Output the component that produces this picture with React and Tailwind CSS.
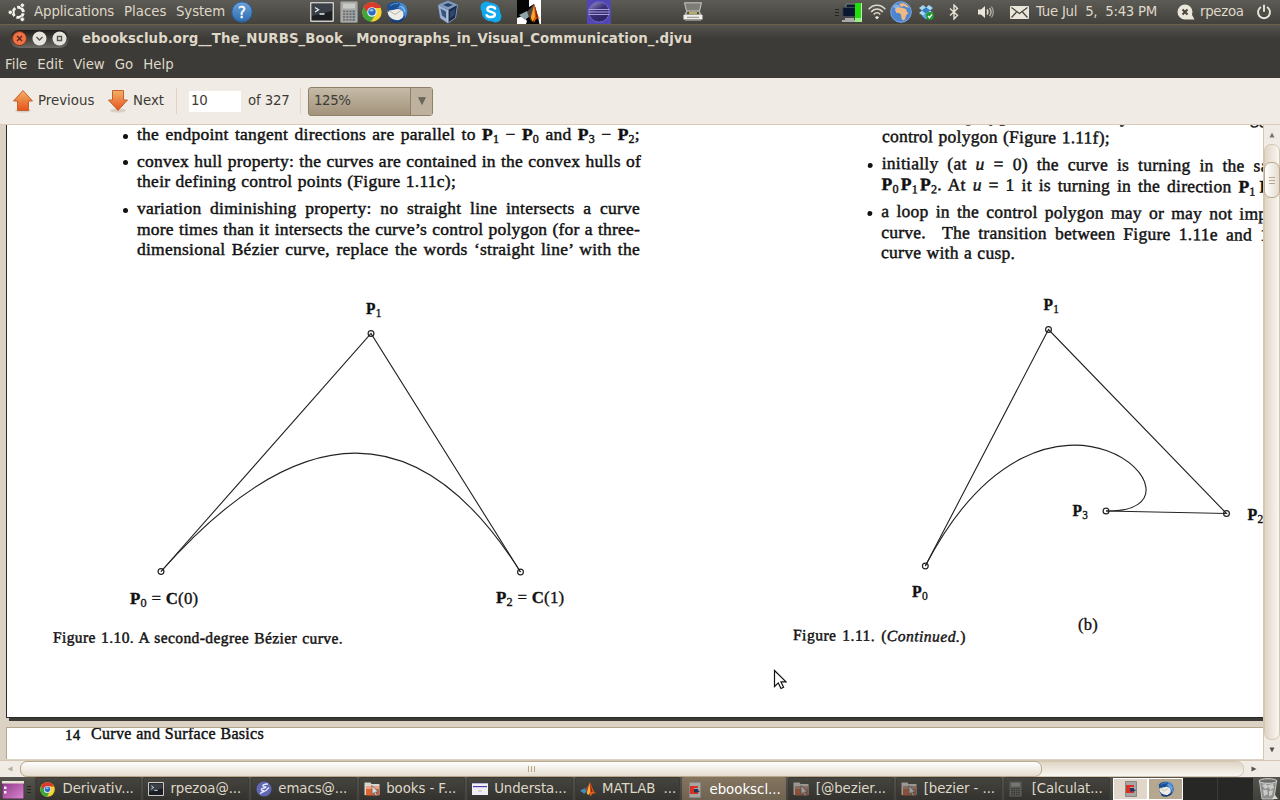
import React from "react";

/* ---------- panel icons ---------- */

const Ubuntu = () => (
  <svg viewBox="0 0 18 20" className="block h-5 w-[18px]">
    <circle cx="10.200" cy="10.300" r="5.100" fill="none" stroke="#f4f1e8" strokeWidth="2.900" strokeDasharray="8.680 2" strokeDashoffset="-1" />
    <g fill="#f4f1e8" stroke="#504e49" strokeWidth=".8">
      <circle cx="2.300" cy="10.300" r="2.200" />
      <circle cx="14.300" cy="3.200" r="2.200" />
      <circle cx="14.300" cy="17.300" r="2.200" />
    </g>
  </svg>
);

const Help = () => (
  <svg viewBox="0 0 22 22" className="block size-[22px]">
    <defs>
      <linearGradient id="help" x1="0" y1="0" x2="0" y2="1">
        <stop offset="0" stopColor="#6fa3d8" />
        <stop offset="1" stopColor="#2b6cb0" />
      </linearGradient>
    </defs>
    <circle cx="11" cy="11" r="10.200" fill="url(#help)" stroke="#2a5f9c" />
    <text x="11" y="16.500" textAnchor="middle" fontSize="15" fill="#fff" stroke="#fff" strokeWidth=".4" fontFamily="DejaVu Sans, sans-serif">?</text>
  </svg>
);

const Terminal = ({ className }) => (
  <svg viewBox="0 0 24 20" className={className} preserveAspectRatio="none">
    <rect x="0.7" y="0.7" width="22.6" height="18.6" rx="1" fill="#1c1e22" stroke="#c9c9c9" strokeWidth="1.600" />
    <path d="M2 2h20v7L2 14z" fill="#3b3f46" />
    <path d="M5 5.500l3.500 2.300L5 10M9.500 12h5" fill="none" stroke="#e6edf2" strokeWidth="1.300" />
  </svg>
);

const Calculator = ({ className, dim }) => (
  <svg viewBox="0 0 18 22" className={className}>
    <rect x="0.5" y="0.5" width="17" height="21" rx="1" fill={dim ? "#5c5c58" : "#a8a8a6"} stroke={dim ? "#4b4b48" : "#868684"} />
    <rect x="3" y="2.5" width="12" height="5" fill={dim ? "#777" : "#c7cbc4"} />
    {[9.5, 12.3, 15.1, 17.9].map((y) =>
      [3, 6.2, 9.4, 12.6].map((x) => (
        <rect key={x + "-" + y} x={x} y={y} width="2.2" height="1.8" fill={dim ? "#383836" : x > 12 ? "#53667a" : "#6d7073"} />
      ))
    )}
  </svg>
);

const Chrome = ({ className }) => (
  <svg viewBox="0 0 20 20" className={className}>
    <circle cx="10" cy="10" r="9.700" fill="#f7d430" />
    <path d="M10 10L1.600 5.200A9.700 9.700 0 0 0 9 19.600L14 12z" fill="#3fa63c" />
    <path d="M1.600 5.200A9.700 9.700 0 0 1 18.800 6H10L6 11z" fill="#d93a2b" />
    <circle cx="10" cy="10" r="4.800" fill="#eef2f5" />
    <circle cx="10" cy="9.800" r="3.700" fill="#2b6bc4" />
    <ellipse cx="9.500" cy="8.200" rx="2" ry="1.200" fill="#8fc0f0" />
  </svg>
);

const Thunderbird = ({ className }) => (
  <svg viewBox="0 0 22 22" className={className}>
    <circle cx="11.500" cy="11" r="10" fill="#1d4f94" />
    <path d="M7 3C11 0 16 1 19 4c3 4 3 9 0 13-.5-5-3-9-8-10z" fill="#4389cf" />
    <path d="M2 8C5 11 8 8 12 8c4 0 7 4 5 8-2 4-8 4-12 1-3-2-4-5-3-9z" fill="#eeece6" />
    <path d="M3 9.500l6 4 6-4" fill="none" stroke="#b5b2aa" />
    <path d="M1 5C4 1 9 0 13 2l2 3-5 2-6 2-2 2z" fill="#1b4f91" />
    <path d="M4 5c2-2 5-3 8-2" stroke="#5b9bd8" fill="none" />
    <path d="M13 5c3 0 5 2 6 6" stroke="#8ec7f4" fill="none" strokeWidth="1.200" />
    <path d="M17 18c-3 3-8 4-12 1" stroke="#153d74" fill="none" strokeWidth="2" />
  </svg>
);

const VirtualBox = () => (
  <svg viewBox="0 0 22 24" className="block h-6 w-[22px]">
    <path d="M11 1l9.500 4-2 13L11 23l-7.500-5-2-13z" fill="#1b2a45" stroke="#7c95b8" />
    <path d="M11 1l9.500 4L11 10 1.500 5z" fill="#7f9bc1" />
    <path d="M1.500 5L11 10v13l-7.500-5z" fill="#9db4d1" />
    <path d="M3.500 8.500L9 11.500v7l-4-3z" fill="#3a5480" />
    <path d="M18.500 8.500L13 11.500v7l4-3z" fill="#2d4672" />
    <path d="M11 10v12" stroke="#c5d3e6" />
    <path d="M6 5l5-2 5 2-5 2z" fill="#2b3f63" />
  </svg>
);

const Skype = () => (
  <svg viewBox="0 0 22 22" className="block size-[22px]">
    <circle cx="11" cy="11" r="9.200" fill="#12a8ee" />
    <circle cx="6.500" cy="6.500" r="6" fill="#12a8ee" />
    <circle cx="15.500" cy="15.500" r="6" fill="#12a8ee" />
    <path d="M15 7.500C14 5.300 7.400 5 7.400 8.300c0 3.200 7.500 2 7.500 5.300 0 3.200-7 3.200-8.200.6" fill="none" stroke="#fff" strokeWidth="2.500" strokeLinecap="round" />
  </svg>
);

const MatlabShape = () => (
  <>
    <path d="M0 13l7-3 4 3-5 5z" fill="#3f8fc4" />
    <path d="M7 10c4-1 5-5 7-8l-2 12-2 4z" fill="#8a4a35" />
    <path d="M14 1c2 3 4 12 9 17-4-2-6 0-8 4-1-4-2-6-5-5z" fill="#e2641c" />
    <path d="M13.500 3l1 12-2.500 5-2-3z" fill="#f6b73a" />
    <path d="M14.500 3l4 12-3 1z" fill="#a3210f" />
  </>
);

const Matlab = () => (
  <svg viewBox="0 0 24 24" className="block size-6">
    <path d="M0 0h24v24H0z" fill="#050505" />
    <path d="M12 0h12v24h-1.500C21 16 19 9 17 4L12 7zM0 18l6-2 4 5-1 3H0z" fill="#fff" />
    <g transform="translate(1 1)">
      <path d="M1 14l8-4 4 4-6 5z" fill="#8fa3ab" />
      <path d="M9 10c3-1 5-5 7-7l-2 12-3 2z" fill="#4d4640" />
      <path d="M16 3c2 3 2 10 6 15-3-2-4 0-6 4-1-4-2-5-4-3z" fill="#d95913" />
      <path d="M16 5l1 11-3 5-1-5z" fill="#f7a92b" />
      <path d="M17 5l3 11-2 1z" fill="#84200f" />
    </g>
  </svg>
);

const Eclipse = () => (
  <svg viewBox="0 0 24 24" className="block size-6">
    <path d="M0 0h24v24H0z" fill="#5246b4" />
    <defs>
      <linearGradient id="ecl" x1="0" y1="0" x2="0.6" y2="1">
        <stop offset="0" stopColor="#a39bd0" />
        <stop offset="0.5" stopColor="#3a3178" />
        <stop offset="1" stopColor="#2c2466" />
      </linearGradient>
    </defs>
    <circle cx="12" cy="12" r="10.200" fill="url(#ecl)" stroke="#7166c4" />
    <path d="M1.500 9.500h21M1.500 12h21M1.500 14.500h21" stroke="#a9a2da" strokeWidth="1.100" />
  </svg>
);

const Scanner = () => (
  <svg viewBox="0 0 20 20" className="block size-5">
    <path d="M1.500.8h17L16.500 9h-13z" fill="#7d7d79" stroke="#c9c8c2" />
    <path d="M3.500 9h13l3 5h-19z" fill="#b9b8b2" />
    <path d="M4.500 9.800h11l1 2.400h-13z" fill="#4d4b3c" />
    <path d="M6 10.300h8v1.400H6z" fill="#e6d87a" />
    <path d="M.5 13h19v4.500H.5z" fill="#efeee9" />
    <path d="M2 18h16" stroke="#9c9b96" strokeWidth="1.500" />
    <path d="M4 15.300h12" stroke="#8c8b86" />
  </svg>
);

const NetMonitor = () => (
  <svg viewBox="0 0 22 22" className="block size-[22px]">
    <path d="M4 3h14v11H4z" fill="#0b1a2d" stroke="#77818a" />
    <path d="M.8 6.500h13v9h-13z" fill="#0a1730" stroke="#3d4853" />
    <path d="M3 17h9v2H3zM0 19h15v2H0z" fill="#a9aaa8" />
    <path d="M13 2h6v19h-6z" fill="#22dd0c" />
    <path d="M13 17h6v4h-6z" fill="#8ff07e" />
    <path d="M19 2h1v19h-1z" fill="#c4e9bf" />
  </svg>
);

const Wifi = () => (
  <svg viewBox="0 0 18 16" className="block h-4 w-[18px]">
    <g fill="none" stroke="#dcd8cb" strokeWidth="1.500">
      <path d="M.7 5.300C5-.2 13-.2 17.300 5.300" />
      <path d="M3.200 8C6.500 4 11.500 4 14.800 8" />
      <path d="M5.700 10.500C7.500 8.300 10.500 8.300 12.300 10.500" />
    </g>
    <path d="M7 13.200C8 12 10 12 11 13.200L9 15.600z" fill="#f1eee2" />
  </svg>
);

const Globe = () => (
  <svg viewBox="0 0 22 22" className="block size-[22px]">
    <circle cx="11" cy="11" r="10.300" fill="#4d86d0" stroke="#7aa9e6" />
    <path d="M5 9c0-2 3-3 5-2.500l3 .5 3 1 1 3 1.500 1-2.500 2.500-1 4-2 1-1.500-2-.5-4-2-1.500-2.500 0z" fill="#f0b981" />
    <path d="M9 3l4-1 4 2 2 3-3-1-2-1-3 1z" fill="#f0b981" />
    <ellipse cx="6.500" cy="5.500" rx="3" ry="2" fill="#a9cbf0" opacity=".6" />
  </svg>
);

const Dropbox = () => (
  <svg viewBox="0 0 16 16" className="block size-4">
    <path d="M5 1l3 2.500L4 6.500 1 4zM11 1L8 3.500l4 3L15 4zM4 6.500l4 3L5 12 1 9zM12 6.500l-4 3L11 12l4-3z" fill="#a3d6f7" />
    <path d="M8 3.500l4 3-4 3-4-3z" fill="#2f82c4" />
    <path d="M4 12l4-2 3.500 2L8 15.500z" fill="#58abe5" />
    <circle cx="12" cy="12" r="3.900" fill="#1d9a2c" />
    <path d="M10 12l1.500 1.700L14 10.500" stroke="#fff" fill="none" strokeWidth="1.300" />
  </svg>
);

const Bluetooth = () => (
  <svg viewBox="0 0 10 16" className="block h-4 w-[10px]">
    <path d="M1 4.500l7.500 6.800L5 15V1l3.500 3.500L1 11.500" fill="none" stroke="#e8e4d8" strokeWidth="1.400" />
  </svg>
);

const Volume = () => (
  <svg viewBox="0 0 18 14" className="block h-[14px] w-[18px]">
    <path d="M1 4.500h3L8 1v12L4 9.500H1z" fill="#eae6da" />
    <path d="M10 4.500q1.800 2.500 0 5" stroke="#dfdbcf" fill="none" strokeWidth="1.500" />
    <path d="M12.500 2.800q3 4.200 0 8.400" stroke="#c0bcb1" fill="none" strokeWidth="1.400" />
    <path d="M14.500 1.500q3.600 5.500 0 11" stroke="#aaa79d" fill="none" strokeWidth="1.200" />
  </svg>
);

const Mail = () => (
  <svg viewBox="0 0 19 13" className="block h-[13px] w-[19px]">
    <rect x="0" y="0" width="19" height="13" rx="1" fill="#eae6d9" />
    <path d="M1.500 1.500l8 6 8-6M1.500 11.500l5-5.500M17.500 11.500l-5-5.500" fill="none" stroke="#45433e" strokeWidth="1.200" />
  </svg>
);

const ChatOff = () => (
  <svg viewBox="0 0 18 16" className="block h-4 w-[18px]">
    <path d="M8 .5a7.500 7.500 0 1 1 0 15 7.500 7.500 0 0 1 0-15zM14 9l3.500 6.500H9z" fill="#eae6d9" />
    <path d="M5.500 5.500l5 5M10.500 5.500l-5 5" stroke="#45433e" strokeWidth="2" />
  </svg>
);

const Power = () => (
  <svg viewBox="0 0 16 16" className="block size-4">
    <path d="M5 3A6 6 0 1 0 11 3M8 .8v7" fill="none" stroke="#eae6d9" strokeWidth="1.900" />
  </svg>
);

/* ---------- task bar icons ---------- */

const Emacs = () => (
  <svg viewBox="0 0 16 16" className="block size-4">
    <circle cx="8" cy="8" r="7.600" fill="#6067b5" />
    <path d="M12 3C8 3 5 4.500 8 5.500c1 .5 3 .4 1.500 1-3 .8-5.500 1.800-3.500 2.800 1 .5 3.500.2 1.500 1-2 .7-3 1.700-3 2.700M13 6.500l-3 3-4 2" fill="none" stroke="#e6e7f7" strokeWidth="1.300" />
  </svg>
);

const Folder = ({ dim }) => (
  <svg viewBox="0 0 16 16" className={dim ? "block size-4 opacity-60" : "block size-4"}>
    <path d="M.5 1.500h6l1 1.500h8v11H.5z" fill="#d8d4ce" />
    <path d="M2 5h13v9.500H2z" fill={dim ? "#c0603c" : "#e0622f"} />
    <path d="M2 5h13v3H2z" fill={dim ? "#b98a7a" : "#efa27d"} />
    <path d="M8 4.500v9l2-2 1.800 3.500 1.500-.8-1.700-3.200h2.800z" fill="#d9dde0" stroke="#555" strokeWidth=".7" />
  </svg>
);

const FormWindow = () => (
  <svg viewBox="0 0 16 12" className="block h-3 w-4">
    <path d="M0 0h16v12H0z" fill="#f1eef6" />
    <path d="M0 0h16v1H0z" fill="#b7aee0" />
    <path d="M1 3h14v1.200H1z" fill="#4a3db0" />
    <path d="M6 8h4M8 6.500v3" stroke="#c9c6d2" />
  </svg>
);

const MatlabSmall = () => (
  <svg viewBox="0 0 23 22" className="block size-4"><MatlabShape /></svg>
);

const Evince = () => (
  <svg viewBox="0 0 12 16" className="block h-4 w-3">
    <path d="M.5.5h11v15H.5z" fill="#a8a6a2" stroke="#8a8884" />
    <path d="M1 4h8v2H5v4h4v2H1z" fill="#d93025" />
    <path d="M5 7h4v1.500l2 .5-2 1.500H5z" fill="#22365c" />
  </svg>
);

const Desktop = () => (
  <svg viewBox="0 0 22 18" className="block h-[18px] w-[22px]">
    <defs>
      <linearGradient id="desk" x1="0" y1="0" x2="1" y2="1">
        <stop offset="0" stopColor="#8d2f86" />
        <stop offset="1" stopColor="#d98ad0" />
      </linearGradient>
    </defs>
    <path d="M0 0h22v18H0z" fill="url(#desk)" stroke="#4f1e4b" />
    <path d="M0 0h22v2.500H0z" fill="#e7e3d3" />
    <path d="M2 5.500h2.500V8H2zM2 10h2.500v2.500H2z" fill="#f5eef4" />
  </svg>
);

const Trash = () => (
  <svg viewBox="0 0 20 22" className="block h-[22px] w-5">
    <path d="M1.500 3h17L16 21H4z" fill="#8f908d" stroke="#c2c3c0" />
    <path d="M4 7l4-1 3 3-4 2zM10 7l5-1 1 4-4 2zM5 12l4 0 1 4-4 2zM11 13l4-1-1 5-3 1z" fill="#c9cac7" />
    <ellipse cx="10" cy="3" rx="9" ry="2.300" fill="#6c6d6a" stroke="#d6d7d4" />
    <path d="M14 21l3-4 3 4z" fill="#d9d9d6" />
  </svg>
);

const Grip = () => (
  <div className="flex w-1 flex-col gap-[2px]">
    <i className="h-px bg-[#25241f]" />
    <i className="h-px bg-[#25241f]" />
    <i className="h-px bg-[#25241f]" />
  </div>
);

/* ---------- top panel ---------- */

const TopPanel = () => (
  <header className="flex h-6 shrink-0 items-center bg-linear-to-b from-[#5d5b55] to-[#43413c] whitespace-nowrap text-[#dfd8c8]">
    <div className="ml-2 w-[26px] shrink-0"><Ubuntu /></div>
    <span className="w-[90px] shrink-0 tracking-[-0.1px]">Applications</span>
    <span className="w-[52px] shrink-0">Places</span>
    <span className="w-[55px] shrink-0 tracking-[-0.1px]">System</span>
    <div className="w-[79px] shrink-0"><Help /></div>
    <div className="w-[30px] shrink-0"><Terminal className="block h-5 w-6" /></div>
    <div className="w-[22px] shrink-0"><Calculator className="block h-[22px] w-[18px]" /></div>
    <div className="w-6 shrink-0"><Chrome className="block size-5" /></div>
    <div className="w-[51px] shrink-0"><Thunderbird className="block size-[22px]" /></div>
    <div className="w-[43px] shrink-0"><VirtualBox /></div>
    <div className="w-[37px] shrink-0"><Skype /></div>
    <div className="w-[70px] shrink-0"><Matlab /></div>
    <div className="w-24 shrink-0"><Eclipse /></div>
    <div className="w-[152px] shrink-0"><Scanner /></div>
    <div className="w-[7px] shrink-0"><Grip /></div>
    <div className="w-[26px] shrink-0"><NetMonitor /></div>
    <div className="w-[22px] shrink-0"><Wifi /></div>
    <div className="w-7 shrink-0"><Globe /></div>
    <div className="w-[31px] shrink-0"><Dropbox /></div>
    <div className="w-7 shrink-0"><Bluetooth /></div>
    <div className="w-[33px] shrink-0"><Volume /></div>
    <div className="w-[26px] shrink-0"><Mail /></div>
    <span className="w-[141px] shrink-0 tracking-[-0.27px] whitespace-pre">Tue Jul  5,  5:43 PM</span>
    <div className="w-[23px] shrink-0"><ChatOff /></div>
    <span className="w-14 shrink-0 tracking-[-0.3px]">rpezoa</span>
    <Power />
  </header>
);

/* ---------- window chrome ---------- */

const TitleBar = () => (
  <div className="flex h-7 shrink-0 items-center border-t border-[#6e6048] bg-linear-to-b from-[#57554f] to-[#3c3b37] to-50% pl-[10px]">
    <div className="flex h-[18px] w-[59px] items-center gap-[5px] rounded-full bg-linear-to-b from-[#1f1e1b] to-[#6b6963] pl-[2px]">
      <svg viewBox="0 0 15 15" className="size-[15px]">
        <circle cx="7.500" cy="7.500" r="7" fill="#ef7347" stroke="#7a2f18" />
        <path d="M5 5l5 5M10 5l-5 5" stroke="#5a2414" strokeWidth="1.300" />
      </svg>
      <svg viewBox="0 0 15 15" className="size-[15px]">
        <circle cx="7.500" cy="7.500" r="7" fill="#e6e3dc" />
        <path d="M4.500 6l3 3 3-3" fill="none" stroke="#55534d" strokeWidth="1.400" />
      </svg>
      <svg viewBox="0 0 15 15" className="size-[15px]">
        <circle cx="7.500" cy="7.500" r="7" fill="#e6e3dc" />
        <path d="M5.500 5.500h4v4h-4z" fill="none" stroke="#55534d" strokeWidth="1.400" />
      </svg>
    </div>
    <h1 className="ml-[13px] font-bold tracking-[0.056px] whitespace-nowrap text-[#dfd8c8]">
      ebooksclub.org__The_NURBS_Book__Monographs_in_Visual_Communication_.djvu
    </h1>
  </div>
);

const MenuBar = () => (
  <nav className="flex h-[26px] shrink-0 items-center gap-[10px] bg-[#3c3b37] pl-[5px] text-[#dfd8c8]">
    <span>File</span>
    <span>Edit</span>
    <span>View</span>
    <span>Go</span>
    <span>Help</span>
  </nav>
);

const Arrow = ({ down }) => (
  <svg viewBox="0 0 22 24" className="block h-6 w-[22px]">
    <defs>
      <linearGradient id={down ? "ad" : "au"} x1="0" y1="0" x2="0" y2="1">
        <stop offset="0" stopColor="#f2b266" />
        <stop offset="1" stopColor="#e8511d" />
      </linearGradient>
    </defs>
    <ellipse cx="11" cy="21.500" rx="8" ry="2" fill="#d8d0c4" />
    <path
      d={down ? "M5.500 1.500h11v9.500h4L11 21.500 1.500 11h4z" : "M11 1.500L20.500 12h-4v9.500h-11V12h-4z"}
      fill={down ? "url(#ad)" : "url(#au)"}
      stroke="#c4622f"
    />
  </svg>
);

const Toolbar = () => (
  <div className="flex h-[47px] shrink-0 items-center border-b border-[#d9cbb5] bg-[#f0ebe4] pl-3 text-[#3c3b37]">
    <div className="w-[26px]"><Arrow /></div>
    <span className="w-[69px]">Previous</span>
    <div className="w-[26px]"><Arrow down /></div>
    <span className="w-[43px]">Next</span>
    <div className="h-[26px] w-[13px] border-l border-[#ddd5c8]" />
    <div className="flex h-[21px] w-[52px] items-center bg-white pl-[2px] tracking-[-0.3px]">10</div>
    <span className="ml-[7px] w-[52px] tracking-[-0.15px]">of 327</span>
    <div className="h-[26px] w-2 border-l border-[#ddd5c8]" />
    <div className="flex h-[29px] w-[125px] items-stretch rounded-[3px] border border-[#8f8069] bg-linear-to-b from-[#c6bba8] to-[#a3937b]">
      <div className="flex flex-1 items-center border-r border-[#8f8069] pl-[5px] tracking-[-0.4px]">125%</div>
      <div className="flex w-[21px] items-center justify-center bg-[#beb19d]">
        <svg viewBox="0 0 8 8" className="size-2"><path d="M.5.5h7L4 7.500z" fill="#6b675d" stroke="#55524a" strokeWidth=".5" /></svg>
      </div>
    </div>
  </div>
);

/* ---------- document ---------- */

const B = ({ children, n }) => (
  <span>
    <b>{children}</b>
    <span className="relative top-[3px] text-[12px] leading-none">{n}</span>
  </span>
);

const Line = ({ className = "", children }) => (
  <div className={"h-[20.500px] leading-[20.500px] whitespace-nowrap [text-align-last:justify] " + className}>{children}</div>
);

const Item = ({ className = "", children }) => (
  <li className={"flex " + className}>
    <i className="mt-[9.500px] mr-[9px] size-[5px] shrink-0 rounded-full bg-[#111]" />
    <div className="shrink-0">{children}</div>
  </li>
);

const Label = ({ x, y, n, rest, w }) => (
  <text x={x} y={y} fontSize="16.500" textLength={w} lengthAdjust="spacingAndGlyphs" fill="#111" stroke="#111" strokeWidth=".35">
    <tspan fontWeight="bold">P</tspan>
    <tspan fontSize="12" dy="3">{n}</tspan>
    {rest && (
      <>
        <tspan dy="-3"> = </tspan>
        <tspan fontWeight="bold">C</tspan>
        <tspan>{rest}</tspan>
      </>
    )}
  </text>
);

const Nodes = ({ points }) =>
  points.map(([x, y]) => <circle key={x} cx={x} cy={y} r="2.900" strokeWidth="1.200" />);

const LeftFigure = () => (
  <svg viewBox="7 290 735 330" className="block h-[330px] w-[735px]">
    <g fill="none" stroke="#222" strokeWidth="1.100">
      <path d="M161 571.500L371 333.500 520.500 572" />
      <path d="M161 571.500Q371 334.500 520.500 572" />
      <Nodes points={[[161, 571.5], [371, 333.5], [520.5, 572]]} />
    </g>
    <Label x={366} y={313.5} n="1" w={15.5} />
    <Label x={130} y={603.5} n="0" rest="(0)" w={68.5} />
    <Label x={496} y={602.5} n="2" rest="(1)" w={68.5} />
  </svg>
);

const RightFigure = () => (
  <svg viewBox="742 290 521 344" className="block h-[344px] w-[521px]">
    <g fill="none" stroke="#222" strokeWidth="1.100">
      <path d="M925.300 566L1048.500 329.500 1226.500 513.500 1106 511" />
      <path d="M925.300 566C1048.500 329.500 1226.500 513.500 1106 511" />
      <Nodes points={[[925.3, 566], [1048.5, 329.5], [1226.5, 513.5], [1106, 511]]} />
    </g>
    <Label x={1043.5} y={309.5} n="1" w={15.5} />
    <Label x={912} y={597} n="0" w={16} />
    <Label x={1072.5} y={515.5} n="3" w={15.5} />
    <Label x={1247.5} y={519.5} n="2" w={16} />
    <text x="1078" y="629.500" fontSize="16" textLength="20" lengthAdjust="spacingAndGlyphs" fill="#111" stroke="#111" strokeWidth=".35">(b)</text>
  </svg>
);

const LeftColumn = () => (
  <section className="flex w-[735px] shrink-0 flex-col">
    <ul className="-mt-px h-[166px] pl-[116px]">
      <Item>
        <Line className="w-[503px]">the endpoint tangent directions are parallel to <B n="1">P</B> − <B n="0">P</B> and <B n="3">P</B> − <B n="2">P</B>;</Line>
      </Item>
      <Item className="mt-[6px]">
        <Line className="w-[504px]">convex hull property: the curves are contained in the convex hulls of</Line>
        <Line className="w-[319px]">their defining control points (Figure 1.11c);</Line>
      </Item>
      <Item className="mt-[6.500px]">
        <Line className="w-[503px]">variation diminishing property: no straight line intersects a curve</Line>
        <Line className="w-[503px] tracking-[0.2px]">more times than it intersects the curve’s control polygon (for a three-</Line>
        <Line className="w-[503px]">dimensional Bézier curve, replace the words ‘straight line’ with the</Line>
      </Item>
    </ul>
    <LeftFigure />
    <p className="mt-[8px] ml-[46px] w-[290px] rotate-[0.2deg] text-[15.500px] leading-5 tracking-[0.4px] whitespace-nowrap [text-align-last:justify]">
      Figure 1.10. A second-degree Bézier curve.
    </p>
  </section>
);

const RightColumn = () => (
  <section className="flex w-[521px] shrink-0 flex-col overflow-hidden">
    <div className="h-[165px] origin-top-left rotate-[0.4deg]">
      <ul className="-mt-[21px] pl-[126px]">
        <li className="pl-[14px]">
          <Line className="w-[386px]">the control polygon rather closely and does not wigg</Line>
          <Line className="w-[228px]">control polygon (Figure 1.11f);</Line>
        </li>
        <Item className="mt-[7px]">
          <Line className="w-[387px]">initially (at <i>u</i> = 0) the curve is turning in the sa</Line>
          <Line className="w-[389px]"><B n="0">P</B><span className="pl-[2px]"><B n="1">P</B></span><span className="pl-[2px]"><B n="2">P</B></span>. At <i>u</i> = 1 it is turning in the direction <B n="1">P</B><b className="pl-1">P</b></Line>
        </Item>
        <Item className="mt-[7px]">
          <Line className="w-[386px]">a loop in the control polygon may or may not imp</Line>
          <Line className="w-[388px]">curve.&nbsp; The transition between Figure 1.11e and 1</Line>
          <Line className="w-[134px]">curve with a cusp.</Line>
        </Item>
      </ul>
    </div>
    <RightFigure />
    <p className="-mt-[8px] ml-[51px] w-[173px] rotate-[0.6deg] text-[15.500px] leading-5 tracking-[0.5px] whitespace-nowrap [text-align-last:justify]">
      Figure 1.11. (<i>Continued.</i>)
    </p>
  </section>
);

const Document = () => (
  <div className="h-[635px] w-[1263px] shrink-0 overflow-hidden bg-[#dbd2c3] pl-[6px] font-['Liberation_Serif',serif] text-[17.500px] tracking-[0.25px] text-[#111] [-webkit-text-stroke:0.45px_#111]">
    <article className="flex h-[593px] overflow-hidden border-b border-l border-[#2b2a27] bg-white">
      <LeftColumn />
      <RightColumn />
    </article>
    <div className="ml-[3px] h-[3px] bg-[#3c3b37]" />
    <article className="mt-[6px] h-8 overflow-hidden border-t border-l border-[#b3a58c] bg-white pl-[58px]">
      <p className="-mt-[5px] flex h-[21px] w-[199px] items-center text-[16px] leading-[21px]">
        <span className="w-[26px] pt-[3px] text-[15px]">14</span>
        <span className="-mt-px flex-1 tracking-[0.3px] whitespace-nowrap [text-align-last:justify]">Curve and Surface Basics</span>
      </p>
    </article>
  </div>
);

const VScroll = () => (
  <div className="flex w-[17px] flex-col items-center border-l border-[#d5c8b2] bg-[#f0ebe4]">
    <div className="flex h-[19px] items-center justify-center">
      <svg viewBox="0 0 6 6" className="size-[6px]"><path d="M3 .5L5.500 5.500h-5z" fill="#77736a" /></svg>
    </div>
    <div className="h-[596px] w-full rounded-[7px] border border-[#d5c8b2] bg-linear-to-r from-[#dfd5c5] to-[#faf7f2] pt-[17px]">
      <div className="-mx-px flex h-9 flex-col items-center justify-center gap-[2px] rounded-[7px] border border-[#b8a78b] bg-linear-to-r from-white to-[#e4dccf]">
        <i className="h-px w-[6px] bg-[#b8a78b]" />
        <i className="h-px w-[6px] bg-[#b8a78b]" />
        <i className="h-px w-[6px] bg-[#b8a78b]" />
      </div>
    </div>
    <div className="flex h-5 items-center justify-center">
      <svg viewBox="0 0 6 6" className="size-[6px]"><path d="M3 5.500L5.500.5h-5z" fill="#55524a" /></svg>
    </div>
  </div>
);

const HScroll = () => (
  <div className="flex h-[17px] shrink-0 items-center border-t border-[#d5c8b2] bg-[#f0ebe4]">
    <div className="flex w-5 justify-center">
      <svg viewBox="0 0 6 6" className="size-[6px]"><path d="M.5 3L5.500.5v5z" fill="#b8ad9b" /></svg>
    </div>
    <div className="h-4 w-[1224px] rounded-[7px] border border-[#d5c8b2] bg-linear-to-b from-[#dfd5c5] to-[#faf7f2]">
      <div className="-mt-px -ml-px flex h-4 w-[1022px] items-center justify-center gap-[2px] rounded-[7px] border border-[#b8a78b] bg-linear-to-b from-white to-[#e4dccf]">
        <i className="h-[6px] w-px bg-[#b8a78b]" />
        <i className="h-[6px] w-px bg-[#b8a78b]" />
        <i className="h-[6px] w-px bg-[#b8a78b]" />
      </div>
    </div>
    <div className="flex w-[19px] justify-center">
      <svg viewBox="0 0 6 6" className="size-[6px]"><path d="M5.500 3L.5.500v5z" fill="#55524a" /></svg>
    </div>
  </div>
);

/* ---------- task bar ---------- */

const tasks = [
  ["Derivativ...", <Chrome className="block size-[15px]" />],
  ["rpezoa@...", <Terminal className="block h-[14px] w-4" />],
  ["emacs@...", <Emacs />],
  ["books - F...", <Folder />],
  ["Understa...", <FormWindow />],
  ["MATLAB  ...", <MatlabSmall />],
  ["ebookscl...", <Evince />, true],
  ["[@bezier...", <Folder dim />],
  ["[bezier - ...", <Folder dim />],
  ["[Calculat...", <Calculator dim className="block h-4 w-[13px]" />],
];

const TaskBar = () => (
  <footer className="flex h-6 shrink-0 items-center bg-linear-to-b from-[#55534d] to-[#403f3a] whitespace-pre text-[#dfd8c8]">
    <div className="mt-px ml-[2px] w-[25px] shrink-0"><Desktop /></div>
    <div className="w-2 shrink-0"><Grip /></div>
    <div className="flex h-6 w-[1075px] shrink-0 gap-[2px]">
      {tasks.map(([name, icon, active]) => (
        <div
          key={name}
          className={
            active
              ? "flex flex-1 items-center rounded-[2px] bg-linear-to-b from-[#84755f] to-[#6e6250] pt-[2px] text-white"
              : "flex flex-1 items-center rounded-[2px] border border-[#3a3935] bg-linear-to-b from-[#45443f] to-[#33322e]"
          }
        >
          <div className={active ? "flex w-[27px] shrink-0 pl-[7px]" : "flex w-[26.500px] shrink-0 pl-1"}>{icon}</div>
          <span className={active ? "" : "tracking-[-0.08px]"}>{name}</span>
        </div>
      ))}
    </div>
    <div className="ml-[3px] flex h-[22px] w-[140px] shrink-0 bg-[#272726]">
      <div className="flex w-[35px] items-center justify-center border border-white bg-[#e0d6ca]"><Evince /></div>
      <div className="flex w-[35px] items-center justify-center border border-white bg-[#b5a790]"><Thunderbird className="block size-4" /></div>
      <div className="w-[35px] border-r border-[#3c3b37]" />
    </div>
    <div className="ml-[5px] shrink-0"><Trash /></div>
  </footer>
);

export default function App() {
  return (
    <div className="relative flex h-[800px] w-[1280px] flex-col overflow-hidden bg-[#f0ebe4] font-['DejaVu_Sans',sans-serif] text-[13.330px] leading-4">
      <TopPanel />
      <TitleBar />
      <MenuBar />
      <Toolbar />
      <main className="flex h-[635px] shrink-0">
        <Document />
        <VScroll />
      </main>
      <HScroll />
      <TaskBar />
      <svg viewBox="0 0 14 22" className="absolute top-[669px] left-[773px] h-[22px] w-[14px]">
        <path d="M1.500 1.500v16l3.800-3.600 2.700 5.600 2.600-1.300-2.600-5.300h5z" fill="#fff" stroke="#111" strokeWidth="1.200" />
      </svg>
    </div>
  );
}
